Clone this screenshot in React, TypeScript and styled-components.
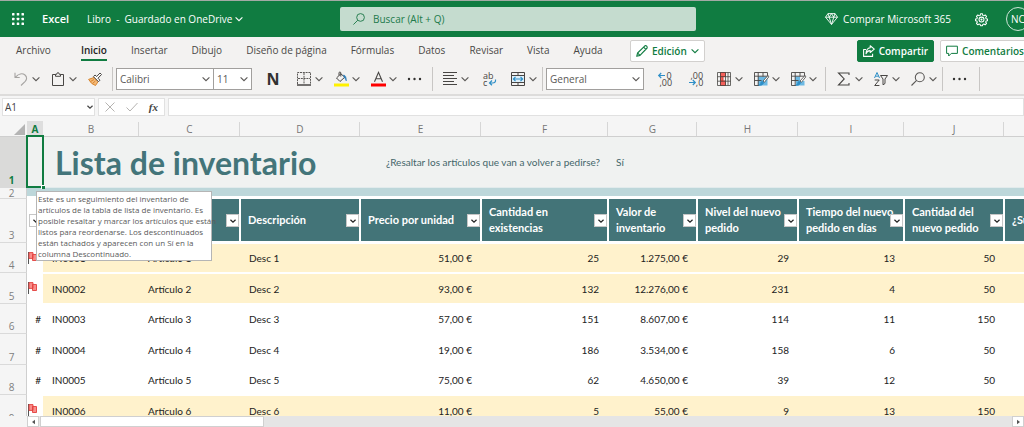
import React from "react";
import styled, { createGlobalStyle, css } from "styled-components";

const ui = `"Open Sans", "Noto Sans", sans-serif`;
const cellFont = `Lato, "Open Sans", sans-serif`;
const green = "#107c41";

const GlobalStyle = createGlobalStyle`
  *, *::before, *::after { box-sizing: border-box; }
  html, body { margin: 0; height: 100%; overflow: hidden; }
  body { font: 10px/14px ${ui}; color: #444; background: #fff; }
  #root { height: 100%; }
  button, input, select { font: inherit; color: inherit; margin: 0; padding: 0; border: 0; background: none; border-radius: 0; }
  button { cursor: pointer; }
  svg { display: block; flex: none; overflow: visible; }
`;

const Page = styled.div`
  display: flex;
  flex-direction: column;
  height: 100%;
  overflow: hidden;
`;

/* The command bars stay wide enough for their last controls. */
const Bars = styled.div`
  flex: none;
  min-width: 1030px;
`;

const TitleBar = styled.header`
  display: flex;
  align-items: center;
  height: 37px;
  padding-left: 12px;
  border-top: 1px solid #a3aaa5;
  background: ${green};
  color: #fff;
`;

const PlainButton = styled.button`
  display: flex;
  align-items: center;
  gap: 5px;
`;

const AppName = styled.strong`
  width: 45px;
  margin-left: 18px;
  font-size: 11px;
  font-weight: 600;
`;

const FileButton = styled(PlainButton)`
  flex: 0 0 auto;
  width: 253px;
  gap: 3px;
  white-space: pre;
`;

const SearchBox = styled.label`
  display: flex;
  flex: 0 1 356px;
  align-items: center;
  gap: 8px;
  height: 24px;
  padding: 0 13px;
  border-radius: 2px;
  background: #c5dccf;
  color: #217a4b;

  input { flex: 1; min-width: 0; outline: 0; }
  input::placeholder { color: #217a4b; opacity: 1; }
`;

const AccountGroup = styled.div`
  display: flex;
  align-items: center;
  gap: 24px;
  margin-left: auto;
`;

const Avatar = styled.button`
  width: 24px;
  height: 24px;
  margin-left: -6px;
  border: 1px solid #cfe5d8;
  border-radius: 50%;
`;

const TabBar = styled.div`
  display: flex;
  align-items: center;
  height: 27px;
  padding-left: 16px;
  background: #f3f2f1;
`;

const Tabs = styled.nav`
  display: flex;
  gap: 24px;
  width: 614px;
`;

const Tab = styled.a<{ $active?: boolean; $file?: boolean }>`
  padding: 3px 0 2px;
  border-bottom: 2px solid ${(p) => (p.$active ? green : "transparent")};
  margin-right: ${(p) => (p.$file ? "6px" : "0")};
  color: ${(p) => (p.$active ? "#252423" : "#494846")};
  font-weight: ${(p) => (p.$active ? 600 : 400)};
  text-decoration: none;
  white-space: nowrap;
`;

const PillButton = styled.button<{ $primary?: boolean }>`
  display: flex;
  align-items: center;
  gap: 4px;
  height: 22px;
  margin-top: 1px;
  padding: 0 5px;
  border: 1px solid ${(p) => (p.$primary ? green : "#d2d0ce")};
  border-radius: 2px;
  background: ${(p) => (p.$primary ? green : "#fff")};
  color: ${(p) => (p.$primary ? "#fff" : "#107c41")};
  font-weight: 600;
  white-space: nowrap;
`;

const ShareGroup = styled.div`
  display: flex;
  gap: 6px;
  margin-left: auto;
`;

const Toolbar = styled.div`
  display: flex;
  align-items: center;
  height: 32px;
  padding-left: 14px;
  border-bottom: 2px solid #dddcdb;
  background: #f3f2f1;
`;

const ToolGroup = styled.div<{ $before?: number; $after?: number }>`
  display: flex;
  align-items: center;
  gap: 11px;
  margin-left: ${(p) => p.$before ?? 0}px;
  margin-right: ${(p) => p.$after ?? 0}px;
`;

const Divider = styled.span`
  width: 1px;
  height: 24px;
  background: #c8c6c4;
`;

const ToolButton = styled.button<{ $width?: number }>`
  display: flex;
  align-items: center;
  justify-content: ${(p) => (p.$width ? "center" : "flex-start")};
  gap: 4px;
  width: ${(p) => (p.$width ? `${p.$width}px` : "auto")};
  height: 22px;
  color: #5a5856;
`;

const BoldLetter = styled.b`
  font: 700 16px/20px ${ui};
  color: #323130;
`;

const FontPickers = styled.div`
  display: flex;
  margin-right: -3px;
`;

const Picker = styled.label<{ $width: number; $joined?: boolean }>`
  display: grid;
  align-items: center;
  width: ${(p) => p.$width}px;
  height: 22px;
  margin-left: ${(p) => (p.$joined ? "-1px" : "0")};
  border: 1px solid #a19f9d;
  background: #fff;
  color: #5a5856;

  select, svg { grid-area: 1 / 1; }
  select { appearance: none; height: 20px; padding-left: 3px; outline: 0; }
  svg { justify-self: end; margin-right: 3px; pointer-events: none; }
`;

const FormulaBar = styled.div`
  display: flex;
  gap: 3px;
  height: 21px;
  padding: 2px 0 1px 2px;
  background: #f5f5f5;
`;

const FormulaBox = styled.div<{ $width?: number }>`
  display: flex;
  align-items: center;
  justify-content: space-between;
  flex: ${(p) => (p.$width ? `0 0 ${p.$width}px` : "1")};
  min-width: 0;
  border: 1px solid #e1e1e1;
  background: #fff;

  input { flex: 1; min-width: 0; padding-left: 2px; outline: 0; }
  svg { margin-right: 1px; }
`;

const FormulaActions = styled(FormulaBox)`
  padding: 0 6px;
`;

const FunctionMark = styled.i`
  font: italic 700 11px/14px "Liberation Serif", serif;
`;

const SheetArea = styled.main`
  position: relative;
  flex: 1;
  min-height: 0;
  overflow: hidden;
  background: #fff;
`;

const Sheet = styled.table`
  table-layout: fixed;
  width: 100%;
  min-width: 1104px;
  border-collapse: separate;
  border-spacing: 0;
  font-family: ${cellFont};

  th, td { padding: 0; }
`;

const Col = styled.col<{ $width?: number }>`
  width: ${(p) => (p.$width ? `${p.$width}px` : "auto")};
`;

const ColumnHead = styled.th<{ $active?: boolean }>`
  height: 20px;
  border-bottom: 1px solid #cfcfcf;
  background: linear-gradient(#d6d6d6, #d6d6d6) right bottom / 1px 14px no-repeat #f5f5f5;
  color: #777;
  font: 10px/14px ${ui};
  vertical-align: bottom;

  ${(p) =>
    p.$active &&
    css`
      border-bottom-color: ${green};
      background: linear-gradient(#dedede, #dedede) right bottom / 100% 15px no-repeat #f5f5f5;
      color: ${green};
      font-weight: 700;
    `}
`;

const Corner = styled(ColumnHead)`
  background: #f5f5f5;
  svg { margin: 0 2px 1px auto; }
`;

const RowHead = styled.th<{ $active?: boolean; $tight?: boolean }>`
  padding: 0 3px 0 0 !important;
  border-right: 1px solid #cfcfcf;
  border-bottom: 1px solid #dadada;
  background: ${(p) => (p.$active ? "#dadad9" : "#f5f5f5")};
  color: ${(p) => (p.$active ? green : "#808080")};
  font: ${(p) => (p.$active ? 700 : 400)} 10px/${(p) => (p.$tight ? "10px" : "14px")} ${ui};
  text-align: center;
  vertical-align: bottom;
`;

const TitleRow = styled.tr`
  height: 51px;
  background: #f0f2f1;
  color: #44666a;

  td { border-bottom: 1px solid #e2ebec; }
`;

const SheetTitle = styled.h1`
  margin: 0;
  padding: 2px 0 0 12px;
  color: #43757a;
  font: 700 32px/40px ${cellFont};
  white-space: nowrap;
`;

const Question = styled.td`
  text-align: right;
  padding-right: 8px !important;
`;

const Answer = styled.td`
  padding-left: 8px !important;
`;

const BandRow = styled.tr`
  height: 11px;
`;

const Band = styled.td`
  border-bottom: 3px solid #fff;
  background: #bdd7da;
`;

const LabelRow = styled.tr`
  height: 44px;
`;

const Label = styled.th`
  position: relative;
  padding: 0 0 0 7px !important;
  border-right: 1px solid #fff;
  border-left: 1px solid #fff;
  border-bottom: 2px solid #fff;
  background: #437478;
  color: #fff;
  font: 700 11px/16px ${cellFont};
  text-align: left;
  white-space: pre;
`;

const FlagLabel = styled(Label)`
  background: #fff;
`;

const FilterButton = styled.button`
  position: absolute;
  right: 0;
  top: 15px;
  display: grid;
  place-items: center;
  width: 13px;
  height: 13px;
  border: 1px solid #c6c6c6;
  background: #fff;
  color: #222;
`;

const ItemRow = styled.tr<{ $marked: boolean }>`
  height: 31px;
  color: #222;

  &:nth-child(odd) { height: 30px; }
  td + td {
    border-top: 1px solid #fff;
    border-bottom: 1px solid #fff;
    background: ${(p) => (p.$marked ? "#fff2cc" : "#fff")};
  }
`;

const FlagCell = styled.td`
  text-align: right;
  padding-right: 2px !important;

  svg { margin: 0 0 1px 1px; }
`;

const TextCell = styled.td`
  padding-left: 9px !important;
`;

const NumberCell = styled.td`
  padding-right: 9px !important;
  text-align: right;
`;

const Selection = styled.div`
  position: absolute;
  left: 26px;
  top: 18px;
  width: 18px;
  height: 53px;
  border: 2px solid ${green};

  &::after {
    content: "";
    position: absolute;
    right: -3px;
    bottom: -3px;
    width: 4px;
    height: 4px;
    border: solid #fff;
    border-width: 1px 0 0 1px;
    background: ${green};
  }
`;

const Note = styled.div`
  position: absolute;
  left: 36px;
  top: 74px;
  width: 176px;
  height: 70px;
  padding: 1px 0 0 1px;
  border: 1px solid #b5b5b5;
  background: #fff;
  color: #5a5a5a;
  font-size: 8px;
  line-height: 11px;
  white-space: pre;
`;

const ScrollRow = styled.div`
  display: flex;
  flex: none;
  height: 11px;
  padding-left: 27px;
  background: #f5f5f5;
`;

const ScrollTrack = styled.div`
  flex: 1;
  background: #e5e5e5;
`;

const ScrollThumb = styled.div`
  width: 23%;
  height: 11px;
  margin-left: 1px;
  border: 1px solid #d0d0d0;
  background: #fff;
`;

const ScrollButton = styled.button`
  display: grid;
  place-items: center;
  width: 12px;
  border: 1px solid #d0d0d0;
  background: #fff;
`;

const Chevron = ({ size = 8 }: { size?: number }) => (
  <svg width={size} height={size} viewBox="0 0 8 8" fill="none" stroke="currentColor" strokeWidth={size < 8 ? 1.6 : 1.1}>
    <path d="M.6 2.300 4 5.700l3.400-3.400" />
  </svg>
);

const Icon = ({ children }: { children: React.ReactNode }) => (
  <svg width="14" height="14" viewBox="0 0 14 14" fill="none" stroke="#484644" strokeWidth="1">
    {children}
  </svg>
);

const Magnifier = ({ size = 13 }: { size?: number }) => (
  <svg width={size} height={size} viewBox="0 0 14 14" fill="none" stroke="currentColor" strokeWidth="1.1">
    <circle cx="8.800" cy="5.200" r="4.500" />
    <path d="M5.600 8.400.5 13.500" />
  </svg>
);

const Dots = () => (
  <Icon>
    <g fill="#323130" stroke="none">
      <circle cx="1" cy="7" r="1.200" />
      <circle cx="6.500" cy="7" r="1.200" />
      <circle cx="12" cy="7" r="1.200" />
    </g>
  </Icon>
);

const Launcher = () => (
  <svg width="12" height="12" viewBox="0 0 12 12" fill="#fff">
    {[0, 1, 2].map((r) =>
      [0, 1, 2].map((c) => <rect key={`${r}${c}`} x={c * 4.75} y={r * 4.75} width="2.5" height="2.5" rx=".6" />)
    )}
  </svg>
);

const Diamond = () => (
  <svg width="13" height="12" viewBox="0 0 13 12" fill="none" stroke="#fff" strokeWidth=".9" strokeLinejoin="round">
    <path d="M3 .6h7l2.5 3.6-6 7.2-6-7.2zM.5 4.2h12M3 .6l1.2 3.6 2.3 7.2 2.3-7.2L10 .6M4.2 4.2 6.5.6l2.3 3.6" />
  </svg>
);

const Gear = () => (
  <svg width="13" height="13" viewBox="0 0 24 24" fill="none" stroke="#fff" strokeWidth="1.9" strokeLinejoin="round">
    <path d="M10.2 1.5h3.6l.6 2.9 1.9.8 2.5-1.6 2.5 2.6-1.6 2.4.8 1.9 2.5.6v3.2l-2.5.6-.8 1.9 1.6 2.4-2.5 2.6-2.5-1.6-1.9.8-.6 2.4h-3.6l-.6-2.4-1.9-.8-2.5 1.6-2.5-2.6 1.6-2.4-.8-1.9-2.5-.6v-3.2l2.5-.6.8-1.9-1.6-2.4 2.5-2.6 2.5 1.6 1.9-.8z" />
    <circle cx="12" cy="12.2" r="4.6" />
    <circle cx="12" cy="12.2" r="1" />
  </svg>
);

const Pencil = () => (
  <svg width="12" height="12" viewBox="0 0 12 12" fill="none" stroke="currentColor" strokeWidth="1.1" strokeLinejoin="round">
    <path d="M.7 11.3 1.6 8 8.9.8q.9-.6 1.8.3t.4 1.9L4 10.4zM7.6 2.1l2.3 2.3M1.6 8 4 10.4" />
  </svg>
);

const Share = () => (
  <svg width="12" height="12" viewBox="0 0 12 12" fill="none" stroke="currentColor" strokeWidth="1.1" strokeLinejoin="round">
    <path d="M3 4.5H.6v6.9h9V8.8M7.2.8l4.1 3.3-4.1 3.4V5.6Q4.3 5.5 3 8.7 3.2 3.2 7.2 2.7z" />
  </svg>
);

const Comment = () => (
  <svg width="12" height="12" viewBox="0 0 12 12" fill="none" stroke="currentColor" strokeWidth="1" strokeLinejoin="round">
    <path d="M.6 1.2h10.8v7.2H5.3L2.7 11V8.4H.6z" />
  </svg>
);

const Undo = () => (
  <svg width="14" height="14" viewBox="0 0 14 14" fill="none" stroke="#a6a4a2" strokeWidth="1.1">
    <path d="M1 .8v4.7h4.7M1.2 5.3C4.6 1.6 8.5.9 11 3c2.5 2.3 1.7 4.7.2 6.3L7 13.5" />
  </svg>
);

const Clipboard = () => (
  <Icon>
    <path d="M4.5 2.5h-3v11h11v-11h-3" />
    <path d="M4.5 4.3V2.3h1.2Q5.900.6 7 .6t1.3 1.700h1.200v2z" />
  </Icon>
);

const Brush = () => (
  <Icon>
    <path d="M.6 7.4 6 5.5l4 4.200-2.500 3.800Q3.500 12.500.6 7.400z" fill="#f4b978" stroke="#d8862f" />
    <path d="M2.500 9.500 6 7.500M4.500 11.500l3-2.600" stroke="#d8862f" />
    <path d="m5.500 4.700 5 5 1.400-1.500-1.900-2L13.500 2.500 12 1 8.700 4.500 7 3z" fill="#fff" />
  </Icon>
);

const Borders = () => (
  <Icon>
    <path d="M.5 12V.5h13V12M7 1v11M1 6.500h12" strokeDasharray="2 .8" strokeWidth=".9" />
    <path d="M0 13h14" strokeWidth="1.500" />
  </Icon>
);

const Bucket = () => (
  <Icon>
    <path d="M0 13h15" stroke="#fff100" strokeWidth="3" />
    <path d="M6.800 1.800 2.500 6 6 9.500l4.800-4.300zM5 3.500V1q0-1 .9-1t.9 1v3.500" />
    <path d="M9.500 3q3 .3 2.800 6-.9-2.800-2-3.200z" fill="#2b7cb8" stroke="#2b7cb8" strokeWidth=".6" />
  </Icon>
);

const FontColor = () => (
  <Icon>
    <path d="M0 13h15" stroke="#f00" strokeWidth="3" />
    <path d="M3.500 9.800 7.500.3l4 9.500M4.800 6.800h5.400" strokeWidth="1.100" />
  </Icon>
);

const AlignLeft = () => (
  <Icon>
    <path d="M0 .5h14M0 3.500h11M0 6.500h14M0 9.500h11M0 12.500h14" />
  </Icon>
);

const iconText = { fontFamily: ui, fill: "#484644", stroke: "none" };

const WrapText = () => (
  <Icon>
    <text x="0" y="6.500" fontSize="9" {...iconText}>ab</text>
    <text x="0" y="13.500" fontSize="9" {...iconText}>c</text>
    <path d="M12.500 7.500q.5 3.500-3 3.500H7M9 8.500 6.500 11 9 13.300" stroke="#2e8fc7" strokeWidth="1.200" />
  </Icon>
);

const Merge = () => (
  <Icon>
    <path d="M.5.5h13v13H.5zM.5 3.500h13M.5 10.500h13M7 .5v3M7 10.500v3" />
    <path d="M1 4h12v6H1z" fill="#dff0fa" stroke="none" />
    <path d="M2.300 7h9.400M4.500 4.900 2.400 7l2.100 2.100M9.500 4.900 11.600 7 9.500 9.100" stroke="#2e8fc7" strokeWidth="1.200" />
  </Icon>
);

const DecimalLess = () => (
  <Icon>
    <path d="M7 3.500H.7M3.200 1 .7 3.500 3.200 6" stroke="#2e8fc7" strokeWidth="1.200" />
    <text x="8.500" y="6.500" fontSize="9" {...iconText}>0</text>
    <text x="1.500" y="14" fontSize="9" {...iconText}>,00</text>
  </Icon>
);

const DecimalMore = () => (
  <Icon>
    <text x="1.500" y="6.500" fontSize="9" {...iconText}>,00</text>
    <path d="M0 10.500h6.300M3.800 8l2.500 2.500L3.800 13" stroke="#2e8fc7" strokeWidth="1.200" />
    <text x="6.800" y="14" fontSize="9" {...iconText}>,0</text>
  </Icon>
);

const Conditional = () => (
  <Icon>
    <path d="M3.500.5h5v4h-5zM3.500 9h5v4.500h-5zM3.500 4.500h2.500V9H3.500z" fill="#f4605a" stroke="#e03c31" />
    <path d="M.5.5h13v13H.5zM.5 4.700h13M.5 9.200h13M3.500.5v13M8.500.5v13M11 .5v13" strokeWidth=".8" />
  </Icon>
);

const TableStyle = ({ cell }: { cell?: boolean }) => (
  <Icon>
    <path d={cell ? "M4 4.500h5v4.500H4zM5 9h8.500v4.500H5z" : "M4 4.500h9.500v9H4z"} fill="#6db9e3" stroke="none" />
    <path d="M5 13.500H.5V.5h13V6M.5 4.200h13M.5 8.500h7M4.200.5v13M9 .5v4" strokeWidth=".9" />
    <path d="M14 3.500 9 9l1.300 1.400 4.500-5.500z" fill="#fff" strokeWidth=".8" />
    <path d="M8.300 9.200q-1.800.3-1.700 2-.3 1.600-2 2 3.800.9 5.300-2.600z" fill="#2e8fc7" stroke="#2e8fc7" strokeWidth=".6" />
  </Icon>
);

const Sigma = () => (
  <Icon>
    <path d="M12 3V1H1.500l5.700 5.900L1.500 13H12v-2" strokeWidth="1.100" />
  </Icon>
);

const SortFilter = () => (
  <Icon>
    <path d="M.5 6 3 .5 5.500 6M1.400 4.200h3.200" stroke="#2e8fc7" />
    <path d="M.7 8h4.500L.7 13.500h4.700" />
    <path d="M6.500 3.500h7L11 7v4.500l-2 1.300V7z" />
  </Icon>
);

const Flag = () => (
  <svg width="10" height="12" viewBox="0 0 10 12">
    <path d="M.5 0v12" stroke="#555" />
    <path d="M1 .6h4v5.800H1zM4.500 2.500h4v6h-4z" fill="#f98d8a" stroke="#e2403c" strokeWidth=".9" />
  </svg>
);

const Triangle = ({ right }: { right?: boolean }) => (
  <svg width="3" height="6" viewBox="0 0 4 6" fill="#555">
    <path d={right ? "M0 0v6l4-3z" : "M4 0v6L0 3z"} />
  </svg>
);

const tabs = ["Archivo", "Inicio", "Insertar", "Dibujo", "Diseño de página", "Fórmulas", "Datos", "Revisar", "Vista", "Ayuda"];

const columns = [
  { name: "A", width: 16 },
  { name: "B", width: 96 },
  { name: "C", width: 101 },
  { name: "D", width: 120 },
  { name: "E", width: 121 },
  { name: "F", width: 127 },
  { name: "G", width: 89 },
  { name: "H", width: 101 },
  { name: "I", width: 106 },
  { name: "J", width: 100 },
  { name: "K" },
];

const labels = [
  "",
  "",
  "Descripción",
  "Precio por unidad",
  "Cantidad en\nexistencias",
  "Valor de\ninventario",
  "Nivel del nuevo\npedido",
  "Tiempo del nuevo\npedido en días",
  "Cantidad del\nnuevo pedido",
  "¿Suspendido?",
];

const items = [
  { n: 1, flag: true, values: ["51,00 €", "25", "1.275,00 €", "29", "13", "50"] },
  { n: 2, flag: true, values: ["93,00 €", "132", "12.276,00 €", "231", "4", "50"] },
  { n: 3, flag: false, values: ["57,00 €", "151", "8.607,00 €", "114", "11", "150"] },
  { n: 4, flag: false, values: ["19,00 €", "186", "3.534,00 €", "158", "6", "50"] },
  { n: 5, flag: false, values: ["75,00 €", "62", "4.650,00 €", "39", "12", "50"] },
  { n: 6, flag: true, values: ["11,00 €", "5", "55,00 €", "9", "13", "150"] },
];

const Menu = ({ label, children }: { label: string; children: React.ReactNode }) => (
  <ToolButton aria-label={label}>
    {children}
    <Chevron />
  </ToolButton>
);

const Ribbon = () => (
  <Toolbar role="toolbar" aria-label="Inicio">
    <ToolGroup $after={10}>
      <Menu label="Deshacer"><Undo /></Menu>
      <Menu label="Pegar"><Clipboard /></Menu>
      <ToolButton aria-label="Copiar formato"><Brush /></ToolButton>
    </ToolGroup>
    <Divider />
    <ToolGroup $before={3} $after={10}>
      <FontPickers>
        <Picker $width={98}>
          <select aria-label="Fuente"><option>Calibri</option></select>
          <Chevron />
        </Picker>
        <Picker $width={39} $joined>
          <select aria-label="Tamaño de fuente"><option>11</option></select>
          <Chevron />
        </Picker>
      </FontPickers>
      <ToolButton $width={26} aria-label="Negrita"><BoldLetter>N</BoldLetter></ToolButton>
      <Menu label="Bordes"><Borders /></Menu>
      <Menu label="Color de relleno"><Bucket /></Menu>
      <Menu label="Color de fuente"><FontColor /></Menu>
      <ToolButton aria-label="Más opciones de fuente"><Dots /></ToolButton>
    </ToolGroup>
    <Divider />
    <ToolGroup $before={10} $after={5}>
      <Menu label="Alineación"><AlignLeft /></Menu>
      <ToolButton $width={20} aria-label="Ajustar texto"><WrapText /></ToolButton>
      <Menu label="Combinar y centrar"><Merge /></Menu>
    </ToolGroup>
    <Divider />
    <ToolGroup $before={3} $after={8}>
      <Picker $width={98}>
        <select aria-label="Formato de número"><option>General</option></select>
        <Chevron />
      </Picker>
      <ToolButton $width={20} aria-label="Aumentar decimales"><DecimalLess /></ToolButton>
      <ToolButton $width={20} aria-label="Disminuir decimales"><DecimalMore /></ToolButton>
      <Menu label="Formato condicional"><Conditional /></Menu>
      <Menu label="Dar formato como tabla"><TableStyle /></Menu>
      <Menu label="Estilos de celda"><TableStyle cell /></Menu>
    </ToolGroup>
    <Divider />
    <ToolGroup $before={11} $after={5}>
      <Menu label="Autosuma"><Sigma /></Menu>
      <Menu label="Ordenar y filtrar"><SortFilter /></Menu>
      <Menu label="Buscar y seleccionar"><Magnifier size={14} /></Menu>
    </ToolGroup>
    <Divider />
    <ToolGroup $before={10} $after={12}>
      <ToolButton aria-label="Más opciones"><Dots /></ToolButton>
    </ToolGroup>
    <Divider />
  </Toolbar>
);

export default function App() {
  return (
    <Page>
      <GlobalStyle />
      <Bars>
        <TitleBar>
          <PlainButton aria-label="Iniciador de aplicaciones"><Launcher /></PlainButton>
          <AppName>Excel</AppName>
          <FileButton>
            {"Libro  -  Guardado en OneDrive"}
            <Chevron />
          </FileButton>
          <SearchBox>
            <Magnifier size={12} />
            <input aria-label="Buscar" placeholder="Buscar (Alt + Q)" />
          </SearchBox>
          <AccountGroup>
            <PlainButton><Diamond />Comprar Microsoft 365</PlainButton>
            <PlainButton aria-label="Configuración"><Gear /></PlainButton>
            <Avatar>NC</Avatar>
          </AccountGroup>
        </TitleBar>
        <TabBar>
          <Tabs>
            {tabs.map((t, i) => (
              <Tab key={t} href="#" $active={t === "Inicio"} $file={i === 0}>{t}</Tab>
            ))}
          </Tabs>
          <PillButton><Pencil />Edición<Chevron /></PillButton>
          <ShareGroup>
            <PillButton $primary><Share />Compartir</PillButton>
            <PillButton><Comment />Comentarios</PillButton>
          </ShareGroup>
        </TabBar>
        <Ribbon />
      </Bars>
      <FormulaBar>
        <FormulaBox $width={93}>
          <input aria-label="Cuadro de nombres" defaultValue="A1" />
          <Chevron size={6} />
        </FormulaBox>
        <FormulaActions $width={67}>
          <PlainButton aria-label="Cancelar">
            <svg width="10" height="10" viewBox="0 0 10 10" stroke="#b5b3b1"><path d="m.5.5 9 9m0-9-9 9" /></svg>
          </PlainButton>
          <PlainButton aria-label="Introducir">
            <svg width="12" height="10" viewBox="0 0 12 10" fill="none" stroke="#b5b3b1"><path d="m.5 5.500 3.500 3.500L11.500 1" /></svg>
          </PlainButton>
          <PlainButton aria-label="Insertar función"><FunctionMark>fx</FunctionMark></PlainButton>
        </FormulaActions>
        <FormulaBox><input aria-label="Barra de fórmulas" /></FormulaBox>
      </FormulaBar>
      <SheetArea>
        <Sheet>
          <colgroup>
            <Col $width={27} />
            {columns.map((c) => <Col key={c.name} $width={c.width} />)}
          </colgroup>
          <thead>
            <tr>
              <Corner>
                <svg width="11" height="11" viewBox="0 0 11 11" fill="#b4b4b4"><path d="M11 0v11H0z" /></svg>
              </Corner>
              {columns.map((c) => <ColumnHead key={c.name} scope="col" $active={c.name === "A"}>{c.name}</ColumnHead>)}
            </tr>
            <TitleRow>
              <RowHead scope="row" $active>1</RowHead>
              <td />
              <td colSpan={3}><SheetTitle>Lista de inventario</SheetTitle></td>
              <Question colSpan={2}>¿Resaltar los artículos que van a volver a pedirse?</Question>
              <Answer>Sí</Answer>
              <td colSpan={4} />
            </TitleRow>
            <BandRow>
              <RowHead scope="row" $tight>2</RowHead>
              <Band colSpan={11} />
            </BandRow>
            <LabelRow>
              <RowHead scope="row">3</RowHead>
              <FlagLabel><FilterButton aria-label="Filtrar"><Chevron size={6} /></FilterButton></FlagLabel>
              {labels.map((l, i) => (
                <Label key={i}>
                  {l}
                  <FilterButton aria-label="Filtrar"><Chevron size={6} /></FilterButton>
                </Label>
              ))}
            </LabelRow>
          </thead>
          <tbody>
            {items.map((item) => (
              <ItemRow key={item.n} $marked={item.flag}>
                <RowHead scope="row">{item.n + 3}</RowHead>
                <FlagCell>{item.flag ? <Flag /> : "#"}</FlagCell>
                <TextCell>{`IN000${item.n}`}</TextCell>
                <TextCell>{`Artículo ${item.n}`}</TextCell>
                <TextCell>{`Desc ${item.n}`}</TextCell>
                {item.values.map((v, i) => <NumberCell key={i}>{v}</NumberCell>)}
                <td />
              </ItemRow>
            ))}
          </tbody>
        </Sheet>
        <Selection />
        <Note role="tooltip">
          {"Este es un seguimiento del inventario de\nartículos de la tabla de lista de inventario. Es\nposible resaltar y marcar los artículos que están\nlistos para reordenarse. Los descontinuados\nestán tachados y aparecen con un Sí en la\ncolumna Descontinuado."}
        </Note>
      </SheetArea>
      <ScrollRow>
        <ScrollButton aria-label="Desplazar a la izquierda"><Triangle /></ScrollButton>
        <ScrollTrack><ScrollThumb /></ScrollTrack>
        <ScrollButton aria-label="Desplazar a la derecha"><Triangle right /></ScrollButton>
      </ScrollRow>
    </Page>
  );
}
